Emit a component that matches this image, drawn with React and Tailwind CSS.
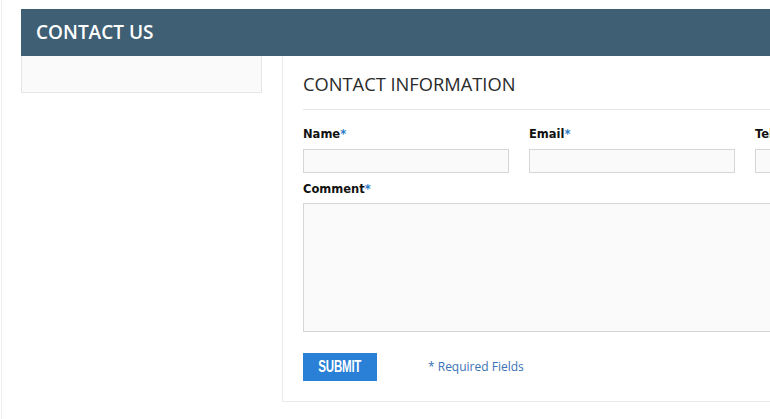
// Contact page - kontakt forma

export default function App() {
  const fields = [
    { label: 'Name', required: true },
    { label: 'Email', required: true },
    { label: 'Telephone', required: false },
  ];

  return (
    <div className="w-full h-[419px] overflow-hidden bg-white">
      <div className="w-[1000px] h-full ml-[1px] border-l border-[#eeeeee] pl-[19px] pt-[9px]" style={{ fontFamily: '"Open Sans", sans-serif' }}>
        {/* Header */}
        <div className="h-[47px] bg-[#3f5f75] flex items-center pl-[15px]">
          <h1 className="text-white text-[19px] font-semibold">CONTACT US</h1>
        </div>

        <div className="flex gap-[20px]">
          {/* Sidebar */}
          <div className="w-[241px] h-[37px] bg-[#fafafa] border-x border-b border-[#e6e6e6]" />

          {/* Main panel */}
          <div className="flex-1 h-[346px] border-l border-b border-[#ebebeb] pl-[20px] pt-[15px]">
            <h2 className="text-[18.3px] text-[#2b2b2b] leading-[26px]">CONTACT INFORMATION</h2>
            <div className="mt-[12px] border-t border-[#e6e6e6]" />

            <div className="grid grid-cols-[206px_206px_206px] gap-x-[20px] mt-[17px]">
              {fields.map((f) => (
                <div key={f.label}>
                  <label className="block text-[11.5px] font-bold text-[#111111] leading-[14px]" style={{ fontFamily: '"DejaVu Sans", Verdana, sans-serif' }}>
                    {f.label}
                    {f.required && <span className="text-[#2b7bc4]">*</span>}
                  </label>
                  <input type="text" className="mt-[8px] block w-full h-[24px] bg-[#fafafa] border border-[#d6d6d6]" />
                </div>
              ))}
            </div>

            <label className="block mt-[9px] text-[11.5px] font-bold text-[#111111] leading-[14px]" style={{ fontFamily: '"DejaVu Sans", Verdana, sans-serif' }}>
              Comment<span className="text-[#2b7bc4]">*</span>
            </label>
            <textarea className="mt-[7px] block w-[658px] h-[129px] bg-[#fafafa] border border-[#d6d6d6] resize-none" />

            <div className="flex items-center mt-[21px]">
              <button className="w-[74px] h-[28px] bg-[#2a7fd6] text-white text-[16px] font-bold flex items-center justify-center">
                <span className="inline-block scale-x-[0.72] tracking-[-0.3px]" style={{ fontFamily: '"Liberation Sans", Arial, sans-serif' }}>SUBMIT</span>
              </button>
              <span className="ml-[51px] text-[12px] text-[#3a72b5]">* Required Fields</span>
            </div>
          </div>
        </div>
      </div>
    </div>
  );
}
